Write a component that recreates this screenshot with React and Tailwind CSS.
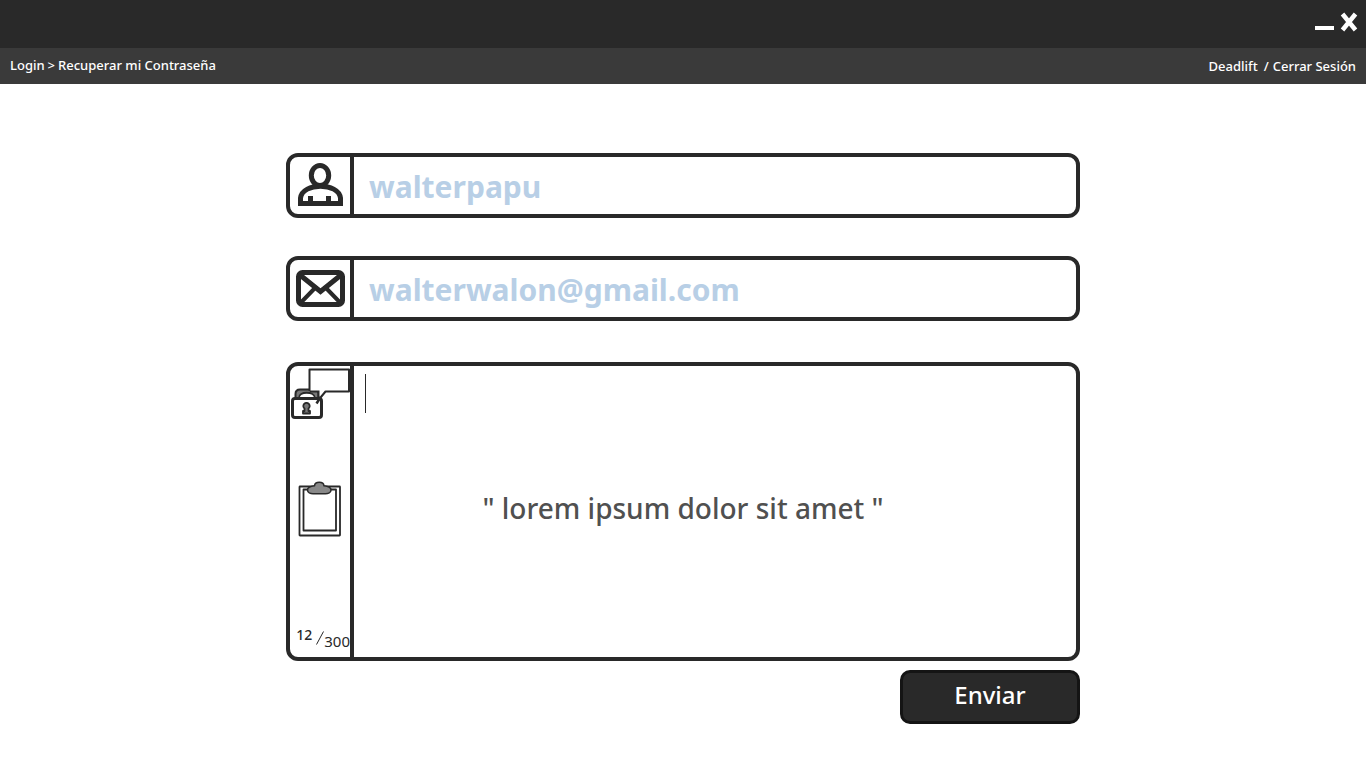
function UserIcon() {
  return (
    <svg className="h-[45px] w-[45px]" viewBox="0 0 45 45" fill="none" stroke="#292929" aria-hidden="true">
      <ellipse cx="22" cy="12.5" rx="8.700" ry="10" strokeWidth="5" />
      <path d="M2.500 40.500V35C3.500 27 13 23.200 22.500 23.200S41.500 27 42.500 35V40.500Z" strokeWidth="5" />
      <path d="M12.500 33V39M30.500 33V39" strokeWidth="5" />
    </svg>
  );
}

function MailIcon() {
  return (
    <svg className="h-[37px] w-[49px]" viewBox="0 0 49 37" fill="none" stroke="#292929" aria-hidden="true">
      <rect x="2.500" y="2.500" width="44" height="32" rx="4" strokeWidth="5" />
      <path d="M4 5L24.500 21.500L45 5" strokeWidth="5" />
      <path d="M4 33.500L19 18M45 33.500L30 18" strokeWidth="4" />
    </svg>
  );
}

function SecretMessageIcon() {
  return (
    <svg className="h-[53px] w-[60px]" viewBox="0 0 60 53" fill="none" stroke="#292929" aria-hidden="true">
      <path d="M5.500 32V28Q5.500 23.500 10 23.500H24Q28.500 23.500 28.500 28V32" fill="#777" strokeWidth="2" />
      <path d="M9 32C8.500 25 24.500 25 25 32Z" fill="#fff" strokeWidth="1.800" />
      <path d="M19.500 3.500H59V25.500H35.500L29 32L28.500 25.500H19.500Z" fill="#fff" stroke="none" />
      <path d="M19.500 25V3.500H59V25.500H35.500L31 31" strokeWidth="2" strokeLinejoin="round" />
      <path d="M19.500 25.500H28.500V31" strokeWidth="2" />
      <rect x="2.500" y="32.500" width="29" height="19" rx="2.500" fill="#fff" strokeWidth="3" />
      <path d="M26.500 37.500L31 30.500" strokeWidth="2.500" />
      <path d="M14.500 42.500A3.200 3.200 0 1 1 18.500 42.500V45H20V47.500H13V45H14.500Z" fill="#777" strokeWidth="1.800" strokeLinejoin="round" />
    </svg>
  );
}

function ClipboardIcon() {
  return (
    <svg className="h-14 w-11" viewBox="0 0 44 56" fill="none" stroke="#292929" strokeLinejoin="round" aria-hidden="true">
      <rect x="1.500" y="5.500" width="40.500" height="49" rx="0.500" strokeWidth="1.800" />
      <rect x="5.500" y="8.500" width="32.500" height="41" strokeWidth="1.800" />
      <path d="M16.500 4.800C17 .2 25.500 .2 26 4.800C30.500 5.300 33 7 33 9C33 11.500 30 12.800 27.500 12.800H15C12.500 12.800 9.500 11.500 9.500 9C9.500 7 12 5.300 16.500 4.800Z" fill="#888" strokeWidth="1.500" />
    </svg>
  );
}

function Field({ id, label, type, placeholder, icon }) {
  return (
    <div className="flex h-[65px] overflow-hidden rounded-xl border-4 border-[#292929] bg-white">
      <label htmlFor={id} aria-label={label} className="flex w-16 shrink-0 items-center justify-center border-r-4 border-[#292929]">
        {icon}
      </label>
      <input
        id={id}
        type={type}
        placeholder={placeholder}
        className="min-w-0 flex-1 px-[15px] pt-px text-[30px] font-bold text-[#b8cfe6] outline-none placeholder:text-[#b8cfe6]"
      />
    </div>
  );
}

export default function App() {
  return (
    <div className="min-h-screen bg-white font-['Noto_Sans',sans-serif] text-[#292929]">
      <header className="flex h-12 items-center justify-end gap-1.5 bg-[#292929] pr-2">
        <button type="button" aria-label="Minimizar" className="pt-2">
          <svg className="h-1 w-[19px]" viewBox="0 0 19 4" aria-hidden="true">
            <path d="M0 2H19" stroke="#fff" strokeWidth="4" />
          </svg>
        </button>
        <button type="button" aria-label="Cerrar" className="pb-1">
          <svg className="h-5 w-[18px]" viewBox="0 0 18 20" aria-hidden="true">
            <path d="M2.500 2L15.500 18M15.500 2L2.500 18" stroke="#fff" strokeWidth="4.500" />
          </svg>
        </button>
      </header>
      <nav className="flex h-9 items-center justify-between bg-[#3a3a3a] px-2.5 text-[13px] font-medium text-white">
        <div className="flex gap-[3px]">
          <a href="#login">Login</a>
          <span>&gt;</span>
          <a href="#recuperar">Recuperar mi Contraseña</a>
        </div>
        <div className="flex pt-px">
          <a href="#perfil" className="pr-1.5">Deadlift</a>
          <span className="pr-1">/</span>
          <a href="#salir">Cerrar Sesión</a>
        </div>
      </nav>
      <main className="mx-auto w-full max-w-[794px] pt-[69px]">
        <form className="flex flex-col" onSubmit={(e) => e.preventDefault()}>
          <Field id="usuario" label="Usuario" type="text" placeholder="walterpapu" icon={<UserIcon />} />
          <div className="pt-[38px] pb-[41px]">
            <Field id="correo" label="Correo" type="email" placeholder="walterwalon@gmail.com" icon={<MailIcon />} />
          </div>
          <div className="relative flex h-[299px] overflow-hidden rounded-xl border-4 border-[#292929]">
            <div className="flex w-16 shrink-0 flex-col items-center border-r-4 border-[#292929] pb-1.5">
              <label htmlFor="mensaje" aria-label="Mensaje">
                <SecretMessageIcon />
              </label>
              <div className="pt-[62px]">
                <ClipboardIcon />
              </div>
              <div className="mt-auto flex w-full items-end justify-end text-[15px] leading-5">
                <span className="pr-1 pb-1.5 text-sm leading-5 font-medium">12</span>
                <svg className="mb-1.5 h-3.5 w-2" viewBox="0 0 8 14" aria-hidden="true">
                  <path d="M0.500 13.500L7.500 0.500" stroke="#292929" />
                </svg>
                <span>300</span>
              </div>
            </div>
            <textarea
              id="mensaje"
              placeholder={'" lorem ipsum dolor sit amet "'}
              className="min-w-0 flex-1 resize-none pt-[122px] pr-16 text-center text-[28px] leading-10 font-medium text-[#505050] outline-none placeholder:text-[#505050]"
            />
            <span className="absolute top-2 left-[75px] h-[39px] w-px bg-[#292929]" aria-hidden="true" />
          </div>
          <button type="submit" className="mt-[9px] h-[54px] w-[180px] self-end rounded-[10px] border-3 border-[#141414] bg-[#292929] pb-1 text-2xl font-medium text-white">
            Enviar
          </button>
        </form>
      </main>
    </div>
  );
}
